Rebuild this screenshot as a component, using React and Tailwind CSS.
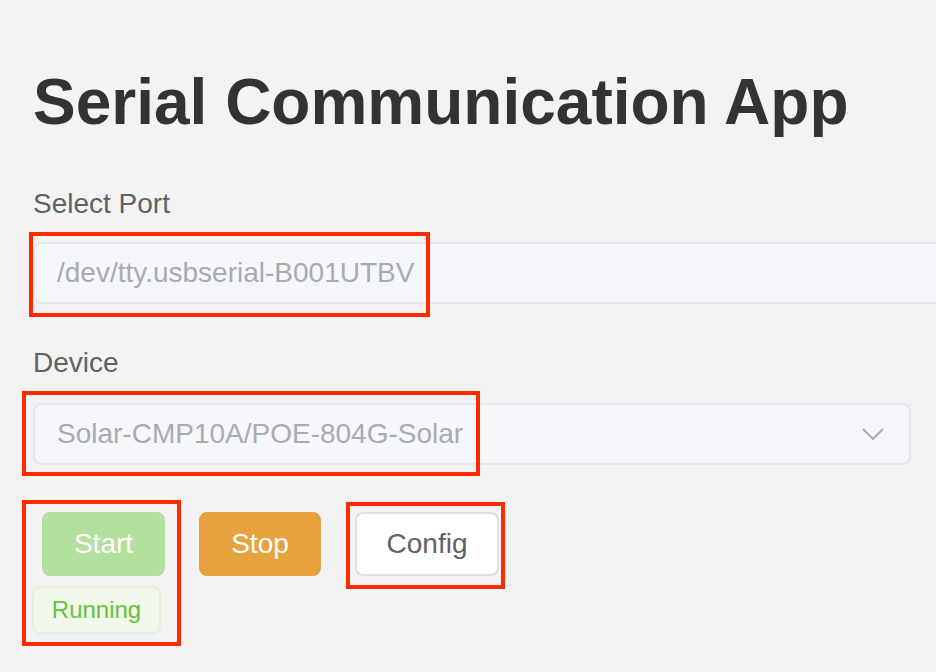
import React from "react";

function RedBox({ className }) {
  return <div className={"pointer-events-none absolute border-[4px] border-[#ff2a00] " + className} />;
}

export default function App() {
  return (
    <div
      className="h-screen w-full overflow-hidden bg-[#f3f3f3] pl-[33px]"
      style={{ fontFamily: '"Liberation Sans", Arial, sans-serif' }}
    >
      <h1 className="mt-[70px] text-[64px] font-bold leading-[64px] text-[#333333]">
        Serial Communication App
      </h1>

      <div className="mt-[56px] text-[28px] leading-[28px] text-[#606266]">Select Port</div>
      <div className="relative mt-[24px] w-[1000px]">
        <div className="flex h-[62px] items-center rounded-[8px] border-2 border-[#e4e7ed] bg-[#f5f7fa] pl-[22px] text-[28px] text-[#a8abb2]">
          /dev/tty.usbserial-B001UTBV
        </div>
        <RedBox className="left-[-4px] top-[-10px] h-[85px] w-[401px]" />
      </div>

      <div className="mt-[45px] text-[28px] leading-[28px] text-[#606266]">Device</div>
      <div className="relative mt-[26px] w-[878px]">
        <div className="flex h-[62px] items-center justify-between rounded-[8px] border-2 border-[#e4e7ed] bg-[#f5f7fa] pl-[22px] pr-[25px] text-[28px] text-[#a8abb2]">
          <span>Solar-CMP10A/POE-804G-Solar</span>
          <svg width="22" height="12" viewBox="0 0 22 12" fill="none">
            <polyline points="1,1 11,11 21,1" stroke="#a8abb2" strokeWidth="2" />
          </svg>
        </div>
        <RedBox className="left-[-11px] top-[-12px] h-[85px] w-[458px]" />
      </div>

      <div className="ml-[9px] mt-[47px] flex items-start gap-[34px]">
        <div className="relative flex flex-col">
          <button className="flex h-[64px] w-[123px] items-center justify-center rounded-[8px] border-2 border-[#b3e19d] bg-[#b3e19d] text-[28px] text-white">
            Start
          </button>
          <div className="-ml-[10px] mt-[10px] flex h-[48px] w-[129px] items-center justify-center rounded-[8px] border-2 border-[#e1f3d8] bg-[#f0f9eb] text-[24px] text-[#67c23a]">
            Running
          </div>
          <RedBox className="left-[-20px] top-[-12px] h-[146px] w-[159px]" />
        </div>
        <button className="flex h-[64px] w-[122px] items-center justify-center rounded-[8px] border-2 border-[#e6a23c] bg-[#e6a23c] text-[28px] text-white">
          Stop
        </button>
        <div className="relative">
          <button className="flex h-[64px] w-[144px] items-center justify-center rounded-[8px] border-2 border-[#dcdfe6] bg-white text-[28px] text-[#606266]">
            Config
          </button>
          <RedBox className="left-[-9px] top-[-10px] h-[87px] w-[159px]" />
        </div>
      </div>
    </div>
  );
}
